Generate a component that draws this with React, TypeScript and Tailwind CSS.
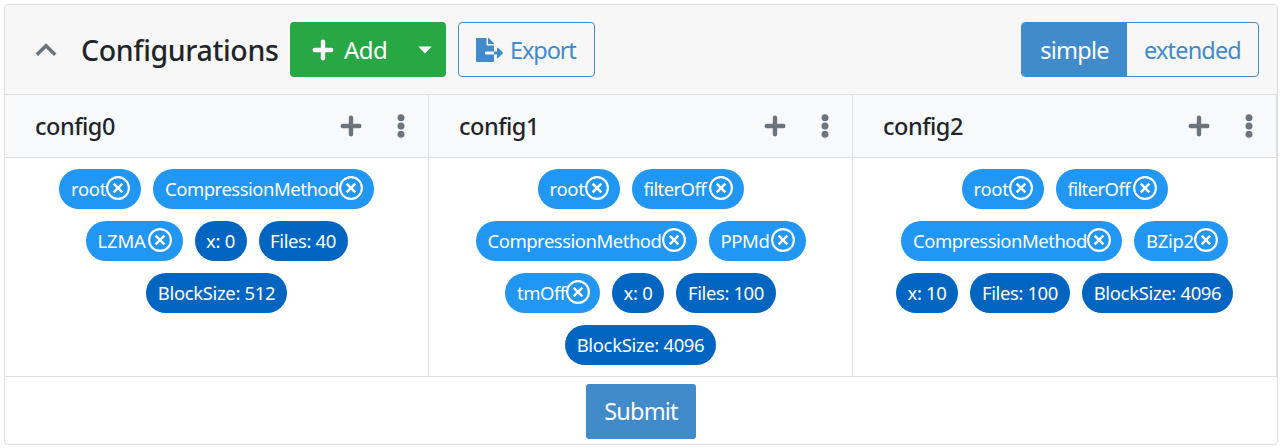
import { FaFileExport } from "react-icons/fa";

type Chip = { label: string; width: string; tracking: string; removable?: boolean };
type Config = { name: string; rows: Chip[][] };

const root: Chip = { label: "root", width: "w-[82px]", tracking: "tracking-[-0.3px]", removable: true };
const filterOff: Chip = { label: "filterOff", width: "w-[112px]", tracking: "tracking-[-0.6px]", removable: true };
const method: Chip = { label: "CompressionMethod", width: "w-[221px]", tracking: "tracking-[-0.49px]", removable: true };
const x0: Chip = { label: "x: 0", width: "w-[52px]", tracking: "tracking-[-0.3px]" };
const files100: Chip = { label: "Files: 100", width: "w-[100px]", tracking: "tracking-[-0.4px]" };
const block4096: Chip = { label: "BlockSize: 4096", width: "w-[151px]", tracking: "tracking-[-0.35px]" };

const configs: Config[] = [
  {
    name: "config0",
    rows: [
      [root, method],
      [
        { label: "LZMA", width: "w-[97px]", tracking: "tracking-[-0.2px]", removable: true },
        x0,
        { label: "Files: 40", width: "w-[89px]", tracking: "tracking-[-0.4px]" },
      ],
      [{ label: "BlockSize: 512", width: "w-[141px]", tracking: "tracking-[-0.35px]" }],
    ],
  },
  {
    name: "config1",
    rows: [
      [root, filterOff],
      [method, { label: "PPMd", width: "w-[97px]", tracking: "tracking-[-0.4px]", removable: true }],
      [{ label: "tmOff", width: "w-[95px]", tracking: "tracking-[-0.5px]", removable: true }, x0, files100],
      [block4096],
    ],
  },
  {
    name: "config2",
    rows: [
      [root, filterOff],
      [method, { label: "BZip2", width: "w-[94px]", tracking: "tracking-[-0.3px]", removable: true }],
      [{ label: "x: 10", width: "w-[62px]", tracking: "tracking-[-0.3px]" }, files100, block4096],
    ],
  },
];

function PlusIcon() {
  return (
    <svg viewBox="0 0 22 22" className="size-[22px]" fill="none" stroke="currentColor" strokeWidth="4.4" strokeLinecap="round">
      <path d="M11 2.7V19.3M2.7 11H19.3" />
    </svg>
  );
}

function DotsIcon() {
  return (
    <svg viewBox="0 0 8 24" className="h-6 w-2" fill="currentColor">
      <circle cx="4" cy="3.7" r="3.5" />
      <circle cx="4" cy="12" r="3.5" />
      <circle cx="4" cy="20.3" r="3.5" />
    </svg>
  );
}

function RemoveIcon() {
  return (
    <svg viewBox="0 0 24 24" className="-mt-[3px] ml-auto size-6 shrink-0" fill="none" stroke="currentColor" strokeWidth="2.1">
      <circle cx="12" cy="12" r="10.9" />
      <path d="M7.6 7.6l8.8 8.8M16.4 7.6l-8.8 8.8" strokeWidth="2.5" />
    </svg>
  );
}

function ChipView({ chip }: { chip: Chip }) {
  return (
    <span
      className={`flex h-10 items-center rounded-full px-[11px] text-[18.5px] whitespace-nowrap text-white ${chip.width} ${chip.tracking} ${
        chip.removable ? "bg-[#2196f3] pl-[12px]" : "justify-center bg-[#0065c1]"
      }`}
    >
      <span className="pb-px">{chip.label}</span>
      {chip.removable && <RemoveIcon />}
    </span>
  );
}

function ConfigColumn({ config }: { config: Config }) {
  return (
    <section className="flex w-[424px] flex-col border-r border-[#dfdfdf]">
      <header className="flex h-[63px] items-center border-b border-[#dfdfdf] bg-[#f8f9fa] pl-[30px]">
        <h2 className="pt-[2px] text-[23.5px] font-medium tracking-[-0.5px] text-[#212529]">{config.name}</h2>
        <button className="ml-auto text-[#6c757d]">
          <PlusIcon />
        </button>
        <button className="mr-[23px] ml-[35px] text-[#6c757d]">
          <DotsIcon />
        </button>
      </header>
      <div className="flex flex-col gap-3 pt-[11px]">
        {config.rows.map((row, i) => (
          <div key={i} className="flex justify-center gap-3">
            {row.map((chip) => (
              <ChipView key={chip.label} chip={chip} />
            ))}
          </div>
        ))}
      </div>
    </section>
  );
}

export default function App() {
  return (
    <main className="h-[448px] bg-white pt-1 pl-1 font-['Noto_Sans',sans-serif]">
      <div className="flex h-[441px] w-[1274px] flex-col overflow-hidden rounded border border-[#dfdfdf] bg-white">
        <header className="flex h-[90px] shrink-0 items-center border-b border-[#dfdfdf] bg-[#f7f7f7] pr-[18px] pl-[30px]">
          <svg viewBox="0 0 22 14" className="h-[14px] w-[22px]" fill="none" stroke="#6c757d" strokeWidth="3.6">
            <path d="M1.8 11.8L11 2.8L20.2 11.8" />
          </svg>
          <h1 className="w-[210px] pt-px pl-6 text-[28.5px] font-medium tracking-[-0.35px] whitespace-nowrap text-[#212529]">Configurations</h1>
          <div className="ml-[23px] flex h-[55px] w-[156px] shrink-0 items-center rounded bg-[#28a745] text-white">
            <button className="flex items-center pl-[22px]">
              <PlusIcon />
              <span className="ml-[10px] text-[24px] tracking-[-0.5px]">Add</span>
            </button>
            <button className="mr-[14px] ml-auto">
              <svg viewBox="0 0 14 8" className="h-2 w-[14px]" fill="currentColor">
                <path d="M.3 .5H13.7L7 7.5Z" />
              </svg>
            </button>
          </div>
          <button className="ml-3 flex h-[55px] w-[137px] shrink-0 items-center rounded border border-[#428bca] pl-[17px] text-[#428bca]">
            <FaFileExport className="h-6 w-[27px]" />
            <span className="ml-[7px] pt-[2px] text-[23.5px] tracking-[-1.1px]">Export</span>
          </button>
          <div className="ml-auto flex h-[55px] w-[238px] shrink-0 overflow-hidden rounded border border-[#428bca] text-[23.5px]">
            <button className="w-[105px] bg-[#428bca] pt-[2px] tracking-[-0.8px] text-white">simple</button>
            <button className="flex-1 pt-[2px] tracking-[-0.85px] text-[#428bca]">extended</button>
          </div>
        </header>
        <div className="flex h-[281px] shrink-0">
          {configs.map((config) => (
            <ConfigColumn key={config.name} config={config} />
          ))}
        </div>
        <footer className="flex flex-1 justify-center border-t border-[#dfdfdf] pt-[7px]">
          <button className="h-[55px] w-[110px] rounded-[3px] bg-[#428bca] pt-px text-[23.5px] tracking-[-0.8px] text-white">Submit</button>
        </footer>
      </div>
    </main>
  );
}
